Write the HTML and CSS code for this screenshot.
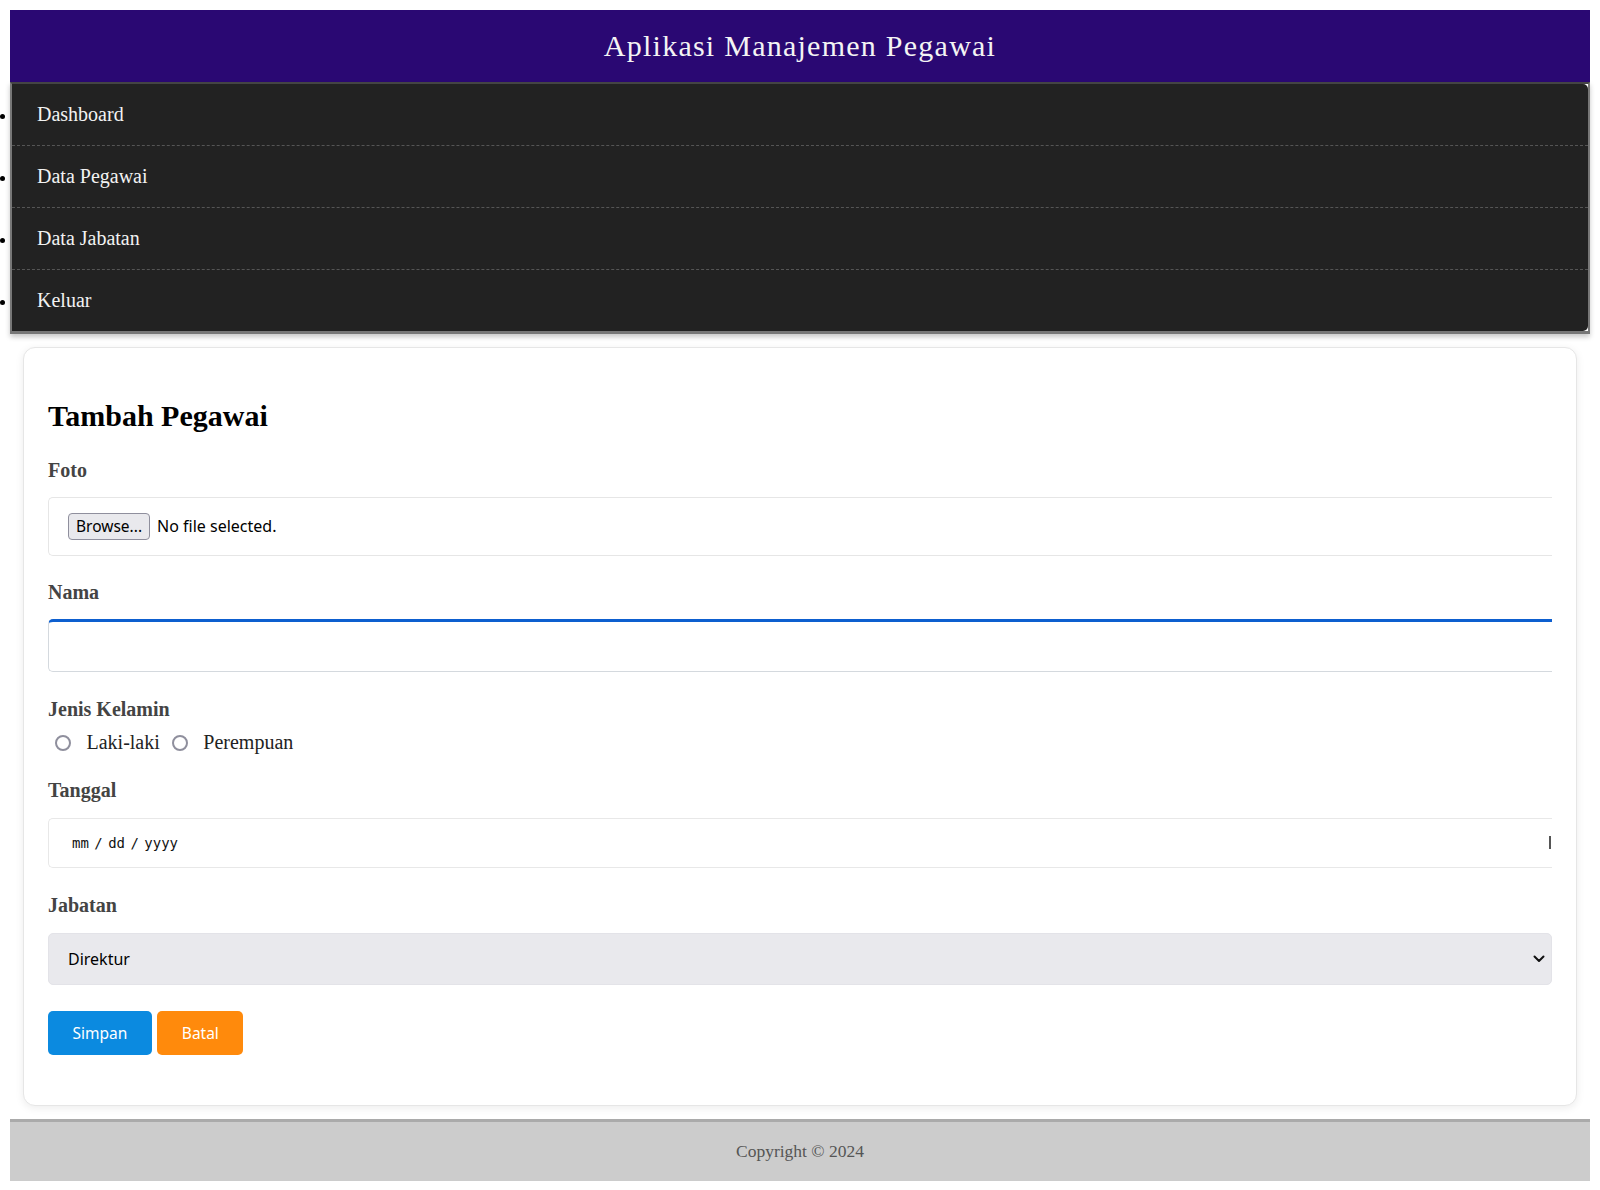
FILE: index.html
```html
<!DOCTYPE html>
<html lang="id">
<head>
<meta charset="utf-8">
<title>Aplikasi Manajemen Pegawai</title>
<link rel="stylesheet" href="styles.css">
</head>
<body>
<header class="app-header">
  <h1 class="app-title">Aplikasi Manajemen Pegawai</h1>
</header>
<div class="nav-shell">
  <ul class="bullet-col">
    <li class="bullet-slot"><span class="bullet-dot"></span></li>
    <li class="bullet-slot"><span class="bullet-dot"></span></li>
    <li class="bullet-slot"><span class="bullet-dot"></span></li>
    <li class="bullet-slot"><span class="bullet-dot"></span></li>
  </ul>
  <nav class="main-nav">
    <ul class="nav-list">
      <li class="nav-item"><a class="nav-link" href="#">Dashboard</a></li>
      <li class="nav-item"><a class="nav-link" href="#">Data Pegawai</a></li>
      <li class="nav-item"><a class="nav-link" href="#">Data Jabatan</a></li>
      <li class="nav-item"><a class="nav-link" href="#">Keluar</a></li>
    </ul>
  </nav>
</div>
<main class="card">
  <h2 class="card-title">Tambah Pegawai</h2>
  <form class="form">
    <div class="field field-file">
      <label class="field-label">Foto</label>
      <div class="file-box">
        <button type="button" class="file-btn">Browse...</button>
        <span class="file-name">No file selected.</span>
      </div>
    </div>
    <div class="field">
      <label class="field-label">Nama</label>
      <input type="text" class="text-input">
    </div>
    <div class="field field-radio">
      <label class="field-label field-label-tight">Jenis Kelamin</label>
      <div class="radio-row">
        <input type="radio" name="jk" class="radio" id="jk1">
        <label class="radio-text" for="jk1">Laki-laki</label>
        <input type="radio" name="jk" class="radio radio-second" id="jk2">
        <label class="radio-text" for="jk2">Perempuan</label>
      </div>
    </div>
    <div class="field">
      <label class="field-label field-label-date">Tanggal</label>
      <div class="date-box">
        <span class="date-text">mm / dd / yyyy</span>
        <span class="date-mark"></span>
      </div>
    </div>
    <div class="field">
      <label class="field-label field-label-date">Jabatan</label>
      <div class="select-wrap">
        <select class="select">
          <option>Direktur</option>
          <option>Manajer</option>
          <option>Staff</option>
        </select>
        <svg class="select-chevron" width="12" height="8" viewBox="0 0 12 8"><path d="M1.5 1.5 L6 6 L10.5 1.5" fill="none" stroke="#111" stroke-width="2" stroke-linecap="round" stroke-linejoin="round"/></svg>
      </div>
    </div>
    <div class="actions">
      <button type="button" class="btn btn-primary">Simpan</button>
      <button type="button" class="btn btn-warning">Batal</button>
    </div>
  </form>
</main>
<footer class="app-footer">Copyright © 2024</footer>
</body>
</html>
```

FILE: styles.css
```css
html {
  background: #fff;
}

body {
  margin: 0;
  padding: 10px;
  font-family: "Liberation Serif", "Times New Roman", serif;
  background: #fff;
}

.app-header {
  height: 72px;
  background: #2a0873;
  display: flex;
  align-items: center;
  justify-content: center;
}

.app-title {
  margin: 0;
  font-size: 30px;
  font-weight: normal;
  letter-spacing: 1.25px;
  line-height: 34px;
  color: #f4f4f4;
}

.nav-shell {
  display: flex;
  margin-left: -10px;
}

.bullet-col {
  flex: none;
  width: 10px;
  margin: 0;
  padding: 2px 0 0;
  list-style: none;
}

.bullet-slot {
  height: 61px;
  padding-top: 29.5px;
  box-sizing: border-box;
  margin-bottom: 1px;
}

.bullet-dot {
  display: block;
  width: 5px;
  height: 5px;
  border-radius: 50%;
  background: #000;
}

.main-nav {
  flex: 1;
  border: 2px solid #777;
  border-top-color: #444;
  border-bottom-width: 3px;
  background: #fff;
  box-shadow: 0 3px 5px rgba(0, 0, 0, 0.22);
}

.nav-list {
  margin: 0;
  padding: 0;
  background: #222;
  border-radius: 0 5px 5px 0;
  list-style: none;
}

.nav-item {
  padding: 19px 25px;
  border-bottom: 1px dashed #555;
  font-size: 20px;
  line-height: 23px;
  color: #000;
}

.nav-item:last-child {
  border-bottom: none;
}

.nav-link {
  color: #f2f2f2;
  text-decoration: none;
}

.card {
  display: block;
  margin: 13px;
  padding: 25px 24px 24px;
  border: 1px solid #e6e6e6;
  border-radius: 12px;
  box-shadow: 0 2px 8px rgba(0, 0, 0, 0.08);
  background: #fff;
}

.card-title {
  margin: 26px 0 25px;
  font-size: 30px;
  font-weight: bold;
  line-height: 34.5px;
  color: #000;
}

.form {
  margin: 0;
}

.field {
  margin-bottom: 26px;
}

.field-file {
  margin-bottom: 25px;
}

.field-radio {
  margin-bottom: 25px;
}

.field-label {
  display: block;
  margin-bottom: 15px;
  font-size: 20px;
  font-weight: bold;
  line-height: 23px;
  color: #444;
}

.field-label-tight {
  margin-bottom: 10px;
}

.field-label-date {
  margin-bottom: 16px;
}

.file-box {
  box-sizing: border-box;
  height: 59px;
  padding: 0 19px;
  display: flex;
  align-items: center;
  border: 1px solid #e6e6e6;
  border-right: none;
  border-radius: 5px 0 0 5px;
}

.file-btn {
  box-sizing: border-box;
  height: 27px;
  padding: 0 7px;
  border: 1px solid #8f8f9d;
  border-radius: 4px;
  background: #e9e9ed;
  font-family: "Noto Sans", "Open Sans", sans-serif;
  font-size: 15.5px;
  line-height: 25px;
  color: #000;
}

.file-name {
  margin-left: 7px;
  font-family: "Noto Sans", "Open Sans", sans-serif;
  font-size: 16px;
  color: #000;
}

.text-input {
  display: block;
  box-sizing: border-box;
  width: 100%;
  height: 53px;
  margin: 0;
  padding: 0 19px;
  border: 1px solid #d4d9de;
  border-top: 3px solid #0d5fcf;
  border-right: none;
  border-radius: 5px 0 0 5px;
  background: #fff;
  outline: none;
  font-size: 16px;
}

.radio-row {
  display: flex;
  align-items: center;
  height: 23px;
}

.radio {
  appearance: none;
  -webkit-appearance: none;
  box-sizing: border-box;
  width: 16px;
  height: 16px;
  margin: 2px 0 0 7px;
  border: 2px solid #8f8f9d;
  border-radius: 50%;
  background: #fff;
  flex: none;
}

.radio-second {
  margin-left: 12px;
}

.radio-text {
  margin-left: 15.5px;
  font-size: 20px;
  line-height: 23px;
  color: #222;
}

.date-box {
  box-sizing: border-box;
  height: 50px;
  padding-left: 23px;
  display: flex;
  align-items: center;
  border: 1px solid #e8e8e8;
  border-right: none;
  border-radius: 5px 0 0 5px;
}

.date-text {
  font-family: "DejaVu Sans Mono", "Liberation Mono", monospace;
  font-size: 14px;
  word-spacing: -3px;
  color: #111;
}

.date-mark {
  width: 2px;
  height: 13px;
  margin-left: auto;
  margin-right: 1px;
  background: #555;
}

.select-wrap {
  position: relative;
}

.select {
  appearance: none;
  -webkit-appearance: none;
  display: block;
  box-sizing: border-box;
  width: 100%;
  height: 52px;
  margin: 0;
  padding: 0 19px;
  border: 1px solid #e3e3e8;
  border-radius: 5px;
  background: #e9e9ed;
  font-family: "Noto Sans", "Open Sans", sans-serif;
  font-size: 16px;
  color: #000;
}

.select-chevron {
  position: absolute;
  right: 7px;
  top: 22px;
  pointer-events: none;
}

.actions {
  display: flex;
  gap: 5.5px;
  margin-bottom: 26px;
}

.btn {
  height: 44px;
  padding: 0 24.5px;
  border: none;
  border-radius: 5px;
  color: #fff;
  font-family: "Noto Sans", "Open Sans", sans-serif;
  font-size: 15.5px;
}

.btn-primary {
  background: #0b8ae0;
}

.btn-warning {
  background: #ff8a0c;
}

.app-footer {
  padding: 19.5px 0;
  border-top: 3px solid #aaa;
  background: #ccc;
  text-align: center;
  font-size: 17.5px;
  line-height: 20px;
  color: #555;
}
```
